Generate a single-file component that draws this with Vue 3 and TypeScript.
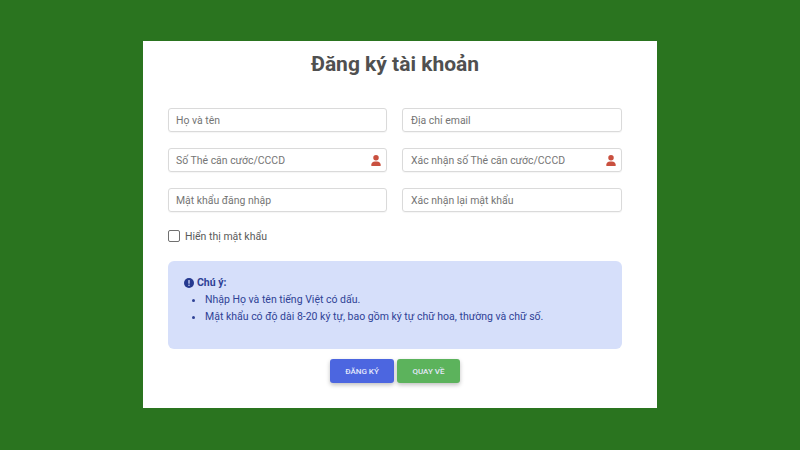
<script setup lang="ts">
const fields: { label: string; icon?: boolean }[] = [
  { label: 'Họ và tên' },
  { label: 'Địa chỉ email' },
  { label: 'Số Thẻ căn cước/CCCD', icon: true },
  { label: 'Xác nhận số Thẻ căn cước/CCCD', icon: true },
  { label: 'Mật khẩu đăng nhập' },
  { label: 'Xác nhận lại mật khẩu' },
]
</script>

<template>
  <div class="page">
    <main class="card">
      <h1 class="title">Đăng ký tài khoản</h1>
      <div class="grid">
        <div v-for="f in fields" :key="f.label" class="field">
          <span class="placeholder">{{ f.label }}</span>
          <svg v-if="f.icon" class="user" viewBox="0 0 448 512" aria-hidden="true">
            <path fill="#c9503f" d="M224 256a128 128 0 1 0 0-256 128 128 0 1 0 0 256zm-45.700 48C79.800 304 0 383.800 0 482.300 0 498.700 13.300 512 29.700 512h388.600c16.400 0 29.700-13.300 29.700-29.700C448 383.800 368.200 304 269.700 304h-91.400z"/>
          </svg>
        </div>
      </div>
      <label class="show">
        <span class="box"></span>
        <span>Hiển thị mật khẩu</span>
      </label>
      <section class="note">
        <div class="note-head">
          <svg class="info" viewBox="0 0 16 16" aria-hidden="true">
            <circle cx="8" cy="8" r="8" fill="#25398f"/>
            <rect x="7" y="3.200" width="2" height="6" rx="0.800" fill="#d6dffa"/>
            <circle cx="8" cy="11.600" r="1.200" fill="#d6dffa"/>
          </svg>
          <strong>Chú ý:</strong>
        </div>
        <ul class="note-list">
          <li>Nhập Họ và tên tiếng Việt có dấu.</li>
          <li>Mật khẩu có độ dài 8-20 ký tự, bao gồm ký tự chữ hoa, thường và chữ số.</li>
        </ul>
      </section>
      <div class="actions">
        <button class="btn primary" type="button">ĐĂNG KÝ</button>
        <button class="btn success" type="button">QUAY VỀ</button>
      </div>
    </main>
  </div>
</template>

<style>
html, body { margin: 0; }
</style>

<style scoped>
.page {
  width: 800px;
  height: 450px;
  box-sizing: border-box;
  padding-top: 41px;
  background: #2a741f;
  font-family: Roboto, "Noto Sans", sans-serif;
  overflow: hidden;
}
.card {
  width: 514px;
  height: 367px;
  margin-left: 143px;
  box-sizing: border-box;
  padding: 9px 35px 0 25px;
  background: #fff;
}
.title {
  margin: 0;
  height: 29px;
  font-size: 21px;
  line-height: 29px;
  font-weight: 700;
  text-align: center;
  color: #505050;
}
.grid {
  margin-top: 29px;
  display: grid;
  grid-template-columns: 219px 220px;
  column-gap: 15px;
  row-gap: 16px;
}
.field {
  height: 24px;
  box-sizing: border-box;
  padding: 0 5px 0 7px;
  display: flex;
  align-items: center;
  justify-content: space-between;
  border: 1px solid #dadada;
  border-radius: 3px;
  box-shadow: 0 1px 1px rgba(0, 0, 0, 0.04);
}
.field:nth-child(even) {
  padding-left: 8px;
}
.placeholder {
  font-size: 10.450px;
  color: #757575;
}
.user {
  width: 10px;
  height: 11px;
}
.show {
  margin-top: 18px;
  display: flex;
  align-items: center;
  gap: 5px;
  height: 12px;
  font-size: 10.500px;
  color: #5a5a5a;
}
.box {
  width: 12px;
  height: 12px;
  box-sizing: border-box;
  border: 1.500px solid #707070;
  border-radius: 2px;
}
.note {
  margin-top: 19px;
  height: 88px;
  box-sizing: border-box;
  padding: 15px 16px;
  background: #d6dffa;
  border-radius: 6px;
  color: #2f4296;
  font-size: 10.500px;
}
.note-head {
  display: flex;
  align-items: center;
  gap: 3px;
  height: 13px;
}
.info {
  width: 10px;
  height: 10px;
}
.note-head strong {
  font-weight: 700;
}
.note-list {
  margin: 2px 0 0;
  padding-left: 21px;
  line-height: 17px;
}
.actions {
  margin-top: 10px;
  display: flex;
  justify-content: center;
  gap: 3px;
}
.btn {
  height: 24px;
  padding: 0;
  border: none;
  border-radius: 3px;
  color: #e4e8fb;
  font-family: inherit;
  font-size: 8px;
  font-weight: 500;
  box-shadow: 0 2px 4px rgba(0, 0, 0, 0.25);
}
.primary {
  width: 64px;
  background: #4c66e0;
}
.success {
  width: 63px;
  background: #5cb35c;
}
</style>
